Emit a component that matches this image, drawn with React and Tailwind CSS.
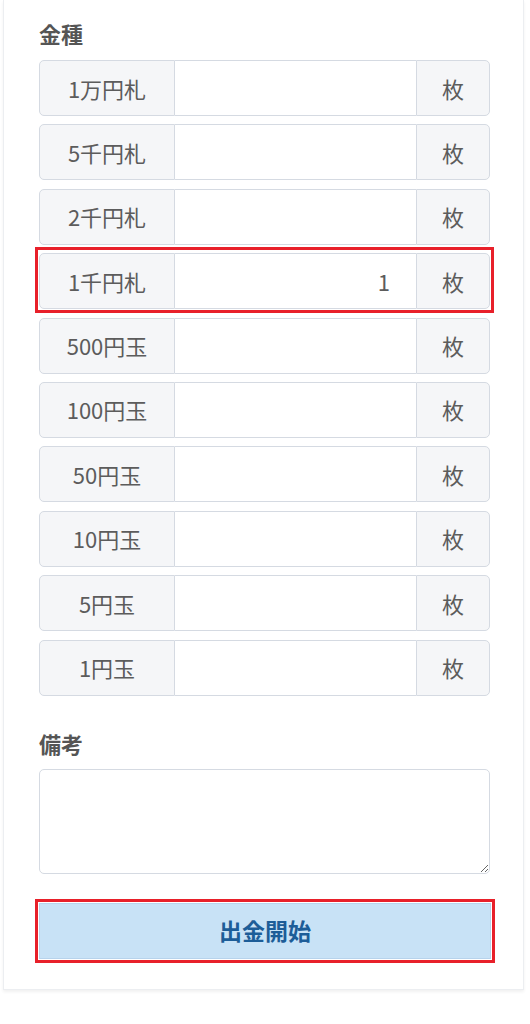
import React from 'react';

const DENOMS = ['1万円札', '5千円札', '2千円札', '1千円札', '500円玉', '100円玉', '50円玉', '10円玉', '5円玉', '1円玉'];

const font = { fontFamily: '"Noto Sans CJK JP", "Noto Sans", sans-serif' };

function DenomRow({ label, value, highlight }) {
  return (
    <div className="relative flex h-[56px] w-[451px]">
      <div className="flex w-[136px] shrink-0 items-center justify-center rounded-l-[5px] border border-[#d5dae2] bg-[#f5f6f8] text-[22px] text-[#5c5c5c]">
        {label}
      </div>
      <input
        readOnly
        value={value}
        className="w-[241px] shrink-0 border-y border-[#d5dae2] bg-white px-[26px] text-right text-[22px] text-[#5c5c5c] outline-none"
      />
      <div className="flex w-[74px] shrink-0 items-center justify-center rounded-r-[5px] border border-[#d5dae2] bg-[#f5f6f8] text-[22px] text-[#5c5c5c]">
        枚
      </div>
      {highlight && (
        <div className="pointer-events-none absolute -top-[6px] -right-[4px] -bottom-[4px] -left-[4px] border-[3px] border-[#e8202a]" />
      )}
    </div>
  );
}

export default function App() {
  return (
    <div className="min-h-[1024px] w-[530px] bg-white" style={font}>
      <div className="ml-[3px] w-[521px] border-x border-b border-[#eceef1] bg-white px-[35px] pt-[17px] pb-[30px] shadow-[0_2px_3px_rgba(0,0,0,0.06)]">
        <h2 className="mb-[11px] text-[22px] leading-[32px] font-bold text-[#555]">金種</h2>
        <div className="flex flex-col gap-[8.4px]">
          {DENOMS.map((d, i) => (
            <DenomRow key={d} label={d} value={i === 3 ? '1' : ''} highlight={i === 3} />
          ))}
        </div>

        <h2 className="mt-[31px] mb-[10px] text-[22px] leading-[32px] font-bold text-[#555]">備考</h2>
        <textarea className="block h-[105px] w-[451px] rounded-[5px] border border-[#d5dae2] bg-white p-2 text-[16px] outline-none" />

        <button className="mt-[29px] flex h-[56px] w-[452px] items-center justify-center border border-[#b7d3ec] bg-[#c8e2f6] text-[23px] font-bold text-[#1d5d98] outline-[3px] outline-solid outline-[#e8202a] outline-offset-[1px]">
          出金開始
        </button>
      </div>
    </div>
  );
}
